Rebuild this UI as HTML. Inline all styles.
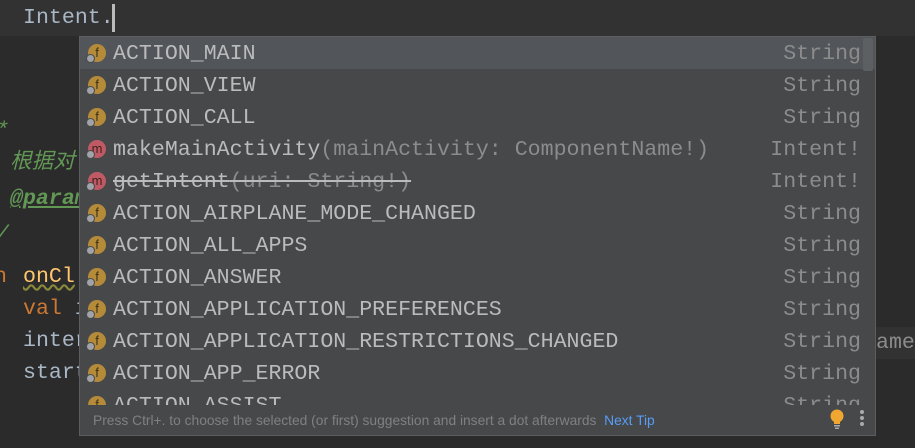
<!DOCTYPE html>
<html><head><meta charset="utf-8"><style>
*{margin:0;padding:0;box-sizing:border-box}
body{width:915px;height:448px;background:#2b2b2b;overflow:hidden;position:relative;font-family:"Liberation Mono","Noto Sans CJK SC",monospace;font-size:21.6px;}
.t{position:absolute;white-space:pre;line-height:32px}
.pop{position:absolute;left:79px;top:36px;width:797px;height:400px;background:#46484a;border:1px solid #5b5d5f;overflow:hidden}
.row{position:absolute;left:0;width:795px;height:32px;line-height:34px;white-space:pre;color:#bbbbbb}
.row .n{position:absolute;left:33px}
.row .ty{position:absolute;right:14px;color:#8c8c8c}
.ic{position:absolute;left:8px;top:7px;width:18px;height:18px;border-radius:50%;color:#3a2f1a;font-family:"Liberation Sans",sans-serif;font-size:13px;line-height:18px;text-align:center}
.f{background:#b58b3a}
.m{background:#bf5a64;color:#402020}
.ic:after{content:"";position:absolute;left:-2px;top:10px;width:7px;height:7px;border-radius:50%;background:#a0a4a8;border:1px solid #46484a}
.g{color:#8c8c8c}
</style></head><body>
<div style="position:absolute;left:0;top:0;width:915px;height:36px;background:#323232"></div>
<div style="position:absolute;left:875px;top:327px;width:40px;height:32px;background:#323232"></div>
<div class="t" style="left:23px;top:2px;color:#a9b7c6">Intent.</div>
<div style="position:absolute;left:112px;top:4px;width:3px;height:28px;background:#bbbbbb"></div>
<div class="t" style="left:-4px;top:115px;color:#629755;font-style:italic">*</div>
<div class="t" style="left:10px;top:147px;color:#629755;font-style:italic">根据对</div>
<div class="t" style="left:10px;top:183px;color:#629755;font-style:italic;font-weight:bold;text-decoration:underline">@param</div>
<div class="t" style="left:-4px;top:219px;color:#629755;font-style:italic">/</div>
<div class="t" style="left:-6px;top:261px;color:#cc7832">n</div>
<div class="t" style="left:23px;top:261px;color:#ffc66d;text-decoration:underline wavy #8a8a3a">onCl</div>
<div class="t" style="left:23px;top:293px;color:#cc7832">val <span style="color:#a9b7c6">i</span></div>
<div class="t" style="left:23px;top:325px;color:#a9b7c6">inter</div>
<div class="t" style="left:23px;top:357px;color:#a9b7c6">start</div>
<div class="t" style="left:876px;top:327px;color:#8c8c8c">ame</div>
<div class="pop">
<div class="row" style="top:0;background:#52565a"><div class="ic f">f</div><span class="n">ACTION_MAIN</span><span class="ty">String</span></div>
<div class="row" style="top:32px"><div class="ic f">f</div><span class="n">ACTION_VIEW</span><span class="ty">String</span></div>
<div class="row" style="top:64px"><div class="ic f">f</div><span class="n">ACTION_CALL</span><span class="ty">String</span></div>
<div class="row" style="top:96px"><div class="ic m">m</div><span class="n">makeMainActivity<span class="g">(mainActivity: ComponentName!)</span></span><span class="ty">Intent!</span></div>
<div class="row" style="top:128px"><div class="ic m">m</div><span class="n" style="text-decoration:line-through">getIntent<span class="g">(uri: String!)</span></span><span class="ty">Intent!</span></div>
<div class="row" style="top:160px"><div class="ic f">f</div><span class="n">ACTION_AIRPLANE_MODE_CHANGED</span><span class="ty">String</span></div>
<div class="row" style="top:192px"><div class="ic f">f</div><span class="n">ACTION_ALL_APPS</span><span class="ty">String</span></div>
<div class="row" style="top:224px"><div class="ic f">f</div><span class="n">ACTION_ANSWER</span><span class="ty">String</span></div>
<div class="row" style="top:256px"><div class="ic f">f</div><span class="n">ACTION_APPLICATION_PREFERENCES</span><span class="ty">String</span></div>
<div class="row" style="top:288px"><div class="ic f">f</div><span class="n">ACTION_APPLICATION_RESTRICTIONS_CHANGED</span><span class="ty">String</span></div>
<div class="row" style="top:320px"><div class="ic f">f</div><span class="n">ACTION_APP_ERROR</span><span class="ty">String</span></div>
<div class="row" style="top:352px"><div class="ic f">f</div><span class="n">ACTION_ASSIST</span><span class="ty">String</span></div>
<div style="position:absolute;left:783px;top:1px;width:10px;height:33px;background:#5d6063;border-radius:2px"></div>
<div style="position:absolute;left:0;top:368px;width:795px;height:31px;background:#46484a;font-family:'Liberation Sans',sans-serif;font-size:13.8px;line-height:31px;color:#808080;padding-left:13px;white-space:nowrap">Press Ctrl+. to choose the selected (or first) suggestion and insert a dot afterwards &nbsp;<span style="color:#589df6">Next Tip</span></div>
<svg style="position:absolute;left:749px;top:372px" width="16" height="22" viewBox="0 0 16 22"><circle cx="8" cy="7" r="6.5" fill="#f0a732"/><rect x="5" y="11" width="6" height="4" fill="#f0a732"/><rect x="5" y="16" width="6" height="1.5" fill="#aaa"/><rect x="6" y="18.5" width="4" height="1.5" fill="#aaa"/></svg>
<div style="position:absolute;left:780px;top:373px;width:4px;height:4px;border-radius:50%;background:#aaa;box-shadow:0 6px 0 #aaa,0 12px 0 #aaa"></div>
</div>
</body></html>
